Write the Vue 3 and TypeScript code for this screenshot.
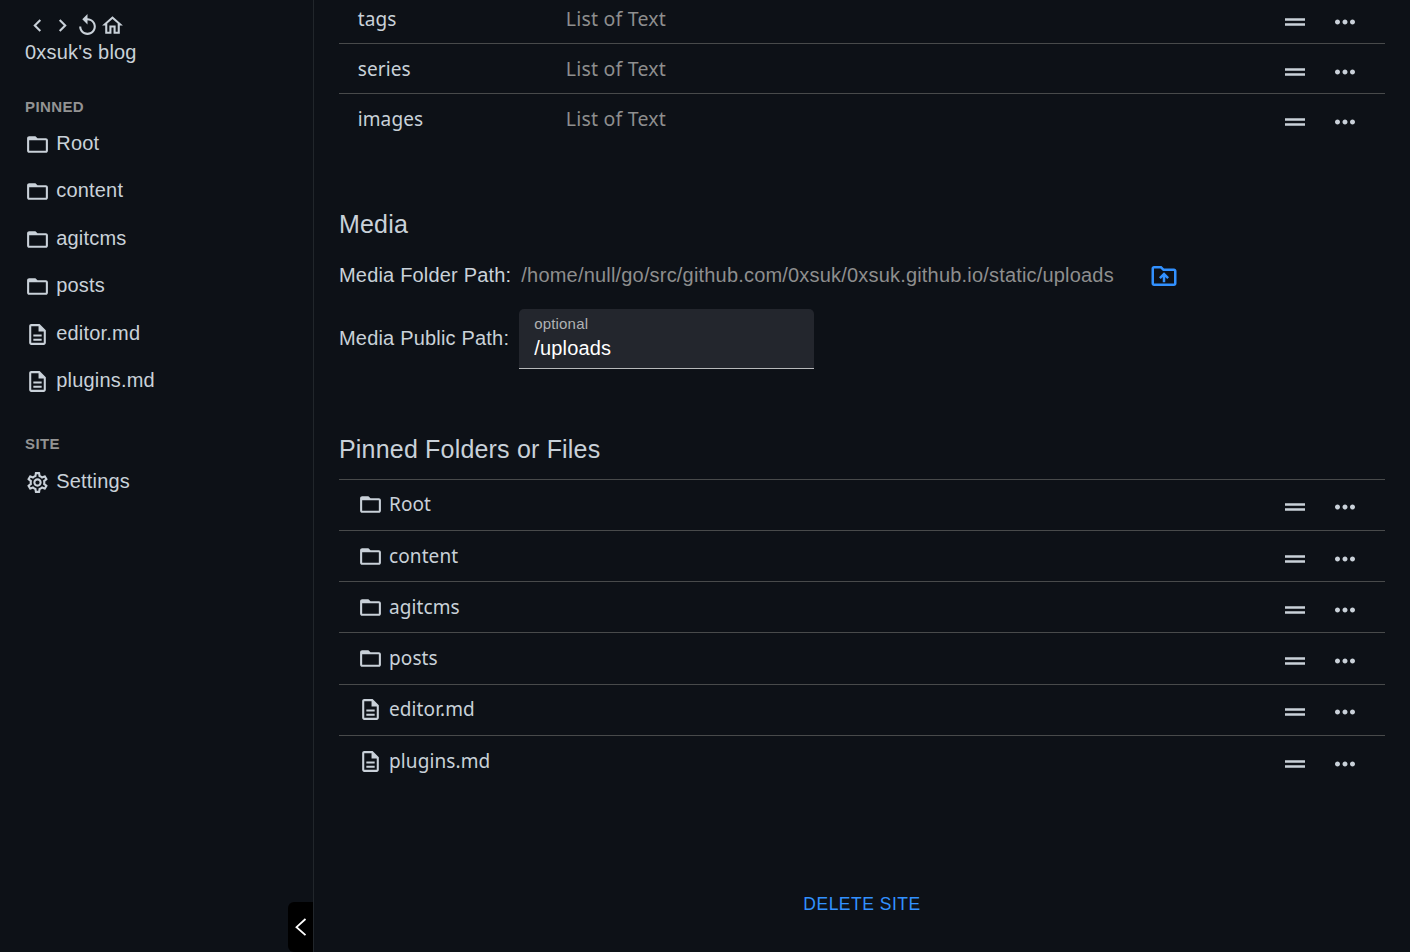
<script setup lang="ts">
import { ref } from 'vue'

type IconName = 'folder' | 'file'

interface Entry {
  name: string
  icon: IconName
}

interface Field {
  name: string
  type: string
}

const icons = {
  back: 'M15.41 7.41 14 6l-6 6 6 6 1.41-1.41L10.83 12z',
  forward: 'M10 6 8.59 7.41 13.17 12l-4.58 4.59L10 18l6-6z',
  reload:
    'M12 5V1L7 6l5 5V7c3.31 0 6 2.69 6 6s-2.69 6-6 6-6-2.69-6-6H4c0 4.42 3.58 8 8 8s8-3.58 8-8-3.58-8-8-8z',
  home: 'm12 5.69 5 4.5V18h-2v-6H9v6H7v-7.81l5-4.5M12 3 2 12h3v8h6v-6h2v6h6v-8h3L12 3z',
  folder:
    'M20 6h-8l-2-2H4c-1.1 0-1.99.9-1.99 2L2 18c0 1.1.9 2 2 2h16c1.1 0 2-.9 2-2V8c0-1.1-.9-2-2-2zm0 12H4V8h16v10z',
  file: 'M8 16h8v2H8zm0-4h8v2H8zm6-10H6c-1.1 0-2 .9-2 2v16c0 1.1.89 2 1.99 2H18c1.1 0 2-.9 2-2V8l-6-6zm4 18H6V4h7v5h5v11z',
  settings:
    'M19.43 12.98c.04-.32.07-.64.07-.98 0-.34-.03-.66-.07-.98l2.11-1.65c.19-.15.24-.42.12-.64l-2-3.46c-.09-.16-.26-.25-.44-.25-.06 0-.12.01-.17.03l-2.49 1c-.52-.4-1.08-.73-1.69-.98l-.38-2.65C14.46 2.18 14.25 2 14 2h-4c-.25 0-.46.18-.49.42l-.38 2.65c-.61.25-1.17.59-1.69.98l-2.49-1c-.06-.02-.12-.03-.18-.03-.17 0-.34.09-.43.25l-2 3.46c-.13.22-.07.49.12.64l2.11 1.65c-.04.32-.07.65-.07.98 0 .33.03.66.07.98l-2.11 1.65c-.19.15-.24.42-.12.64l2 3.46c.09.16.26.25.44.25.06 0 .12-.01.17-.03l2.49-1c.52.4 1.08.73 1.69.98l.38 2.65c.03.24.24.42.49.42h4c.25 0 .46-.18.49-.42l.38-2.65c.61-.25 1.17-.59 1.69-.98l2.49 1c.06.02.12.03.18.03.17 0 .34-.09.43-.25l2-3.46c.12-.22.07-.49-.12-.64l-2.11-1.65zm-1.98-1.71c.04.31.05.52.05.73 0 .21-.02.43-.05.73l-.14 1.13.89.7 1.08.84-.7 1.21-1.27-.51-1.04-.42-.9.68c-.43.32-.84.56-1.25.73l-1.06.43-.16 1.13-.2 1.35h-1.4l-.19-1.35-.16-1.13-1.06-.43c-.43-.18-.83-.41-1.23-.71l-.91-.7-1.06.43-1.27.51-.7-1.21 1.08-.84.89-.7-.14-1.13c-.03-.31-.05-.54-.05-.74s.02-.43.05-.73l.14-1.13-.89-.7-1.08-.84.7-1.21 1.27.51 1.04.42.9-.68c.43-.32.84-.56 1.25-.73l1.06-.43.16-1.13.2-1.35h1.39l.19 1.35.16 1.13 1.06.43c.43.18.83.41 1.23.71l.91.7 1.06-.43 1.27-.51.7 1.21-1.07.85-.89.7.14 1.13zM12 8c-2.21 0-4 1.79-4 4s1.79 4 4 4 4-1.79 4-4-1.79-4-4-4zm0 6c-1.1 0-2-.9-2-2s.9-2 2-2 2 .9 2 2-.9 2-2 2z',
  handle: 'M20 9H4v2h16V9zM4 15h16v-2H4v2z',
  more: 'M6 10c-1.1 0-2 .9-2 2s.9 2 2 2 2-.9 2-2-.9-2-2-2zm12 0c-1.1 0-2 .9-2 2s.9 2 2 2 2-.9 2-2-.9-2-2-2zm-6 0c-1.1 0-2 .9-2 2s.9 2 2 2 2-.9 2-2-.9-2-2-2z',
  upload:
    'M20 6h-8l-2-2H4c-1.1 0-1.99.9-1.99 2L2 18c0 1.1.9 2 2 2h16c1.1 0 2-.9 2-2V8c0-1.1-.9-2-2-2zm0 12H4V6h5.17l1.41 1.41.59.59H20v10zM9.41 14.42 11 12.84V17h2v-4.16l1.59 1.59L16 13.01 12.01 9 8 13.01l1.41 1.41z',
}

const navIcons = [icons.back, icons.forward, icons.reload, icons.home]

const fields: Field[] = [
  { name: 'tags', type: 'List of Text' },
  { name: 'series', type: 'List of Text' },
  { name: 'images', type: 'List of Text' },
]

const pinned: Entry[] = [
  { name: 'Root', icon: 'folder' },
  { name: 'content', icon: 'folder' },
  { name: 'agitcms', icon: 'folder' },
  { name: 'posts', icon: 'folder' },
  { name: 'editor.md', icon: 'file' },
  { name: 'plugins.md', icon: 'file' },
]

const publicPath = ref('/uploads')
</script>

<template>
  <div class="app">
    <aside class="sidebar">
      <nav class="nav">
        <svg v-for="(d, i) in navIcons" :key="i" class="icon" viewBox="0 0 24 24"><path :d="d" /></svg>
      </nav>
      <div class="site-name">0xsuk's blog</div>
      <h2 class="group">PINNED</h2>
      <div v-for="e in pinned" :key="e.name" class="side-item">
        <svg class="icon" viewBox="0 0 24 24"><path :d="icons[e.icon]" /></svg>
        <span>{{ e.name }}</span>
      </div>
      <h2 class="group second">SITE</h2>
      <div class="side-item">
        <svg class="icon" viewBox="0 0 24 24"><path :d="icons.settings" /></svg>
        <span>Settings</span>
      </div>
      <button class="collapse" aria-label="Collapse sidebar">
        <svg viewBox="0 0 25 50"><path d="M17.5 17 8.5 25.2l9 8" /></svg>
      </button>
    </aside>

    <main class="main">
      <section class="fields">
        <div v-for="f in fields" :key="f.name" class="row field-row">
          <span class="field-name">{{ f.name }}</span>
          <span class="field-type">{{ f.type }}</span>
          <span class="actions">
            <svg viewBox="0 0 24 24"><path :d="icons.handle" /></svg>
            <svg viewBox="0 0 24 24"><path :d="icons.more" /></svg>
          </span>
        </div>
      </section>

      <section class="media">
        <h1>Media</h1>
        <div class="line folder-line">
          <span class="label">Media Folder Path:</span>
          <span class="label path">/home/null/go/src/github.com/0xsuk/0xsuk.github.io/static/uploads</span>
          <svg class="upload" viewBox="0 0 24 24"><path :d="icons.upload" /></svg>
        </div>
        <div class="line public-line">
          <span class="label">Media Public Path:</span>
          <label class="text-field">
            <span class="hint">optional</span>
            <input v-model="publicPath" type="text" />
          </label>
        </div>
      </section>

      <section class="pins">
        <h1>Pinned Folders or Files</h1>
        <div v-for="e in pinned" :key="e.name" class="row pin-row">
          <svg class="icon" viewBox="0 0 24 24"><path :d="icons[e.icon]" /></svg>
          <span class="pin-name">{{ e.name }}</span>
          <span class="actions">
            <svg viewBox="0 0 24 24"><path :d="icons.handle" /></svg>
            <svg viewBox="0 0 24 24"><path :d="icons.more" /></svg>
          </span>
        </div>
      </section>

      <button class="delete">DELETE SITE</button>
    </main>
  </div>
</template>

<style>
body {
  margin: 0;
  background: #0d1117;
}
</style>

<style scoped>
.app {
  display: flex;
  height: 952px;
  overflow: hidden;
  background: #0d1117;
  color: #c9d1d9;
  font: 20px/30px "Liberation Sans", Arial, sans-serif;
  letter-spacing: 0.1876px;
}
svg {
  display: block;
  flex: none;
  fill: currentColor;
}
.icon {
  width: 25px;
  height: 25px;
}
button {
  border: 0;
  padding: 0;
  font: inherit;
}

.sidebar {
  position: relative;
  box-sizing: border-box;
  width: 314px;
  flex: none;
  padding: 13px 25px 0;
  border-right: 1px solid #21262b;
}
.nav {
  display: flex;
  height: 24px;
}
.site-name {
  height: 56px;
}
.group {
  margin: 0;
  height: 27.25px;
  line-height: 27px;
  font-size: 15px;
  font-weight: 700;
  letter-spacing: 0.4px;
  color: #939393;
}
.group.second {
  height: 28.5px;
  margin-top: 24.5px;
}
.side-item {
  display: flex;
  align-items: center;
  height: 47.5px;
  gap: 6.25px;
}
.side-item span {
  margin-top: -2.5px;
}
.collapse {
  position: absolute;
  right: 0;
  bottom: 0;
  width: 25px;
  height: 50px;
  border-radius: 6px 0 0 6px;
  background: #000;
  color: #fff;
}
.collapse path {
  fill: none;
  stroke: currentColor;
  stroke-width: 1.8;
}

.main {
  flex: 1;
  display: flex;
  flex-direction: column;
  padding: 0 25px;
}
.row {
  display: flex;
  align-items: center;
  box-sizing: border-box;
  border-top: 1px solid #484a4b;
  font-family: "Noto Sans", "Open Sans", sans-serif;
  font-size: 19px;
  letter-spacing: 0.1px;
}
.fields {
  margin-top: -7px;
}
.field-row {
  height: 50px;
  padding-left: 18.75px;
}
.field-name {
  width: 208px;
}
.field-type {
  color: #8e8e8e;
  font-size: 19.5px;
  letter-spacing: 0.22px;
}
.actions {
  display: flex;
  gap: 20px;
  margin-left: auto;
  margin-right: 25px;
  padding-top: 6px;
}
.actions svg {
  width: 30px;
  height: 30px;
}

h1 {
  margin: 0;
  font-size: 25px;
  font-weight: 400;
  line-height: 40px;
}
.media {
  padding-top: 61px;
}
.line {
  display: flex;
  align-items: center;
}
.label {
  margin-top: -2px;
}
.folder-line {
  height: 30px;
  margin-top: 17px;
}
.path {
  margin-left: 10px;
  color: #8e8e8e;
}
.upload {
  width: 30px;
  height: 30px;
  margin-left: 35px;
  color: #3291ff;
}
.public-line {
  height: 60px;
  margin-top: 18px;
}
.text-field {
  display: flex;
  flex-direction: column;
  box-sizing: border-box;
  width: 295px;
  height: 60px;
  margin-left: 10px;
  padding: 5px 15px 0;
  border-bottom: 1px solid #b7b8ba;
  border-radius: 5px 5px 0 0;
  background: #23262d;
}
.hint {
  font-size: 15px;
  line-height: 20px;
  color: #b0b2b4;
}
.text-field input {
  width: 100%;
  height: 28px;
  padding: 0;
  border: 0;
  outline: 0;
  background: none;
  color: #fff;
  font: inherit;
  letter-spacing: inherit;
}

.pins {
  padding-top: 60px;
}
.pins h1 {
  margin-bottom: 9.7px;
}
.pin-row {
  height: 51.25px;
  padding-left: 18.75px;
}
.pin-name {
  margin-top: -0.8px;
  margin-left: 6.25px;
}
.pin-row .actions {
  padding-top: 5px;
}

.delete {
  align-self: center;
  margin-top: 95.3px;
  height: 46px;
  background: none;
  color: #3291ff;
  font-size: 17.5px;
  letter-spacing: 0.5px;
}
</style>
